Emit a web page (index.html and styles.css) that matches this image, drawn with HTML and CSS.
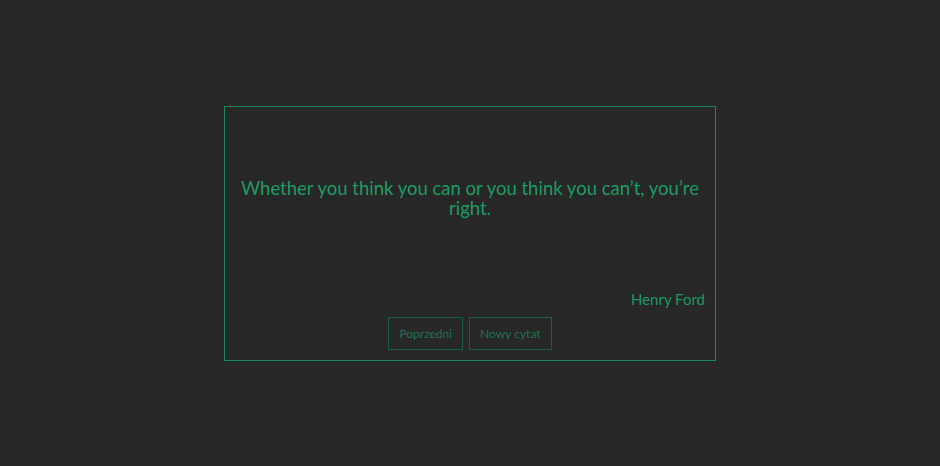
FILE: index.html
```html
<!DOCTYPE html>
<html lang="pl">
<head>
<meta charset="utf-8">
<title>Cytaty</title>
<link rel="stylesheet" href="styles.css">
</head>
<body>
<main class="page">
  <section class="quote-box">
    <div class="quote-area">
      <p class="quote-text">Whether you think you can or you think you can’t, you’re right.</p>
    </div>
    <p class="quote-author">Henry Ford</p>
    <div class="actions">
      <button class="btn" type="button">Poprzedni</button>
      <button class="btn" type="button">Nowy cytat</button>
    </div>
  </section>
</main>
</body>
</html>
```
FILE: styles.css
```css
html, body {
  margin: 0;
  padding: 0;
  height: 100%;
}
body {
  background: #272727;
  font-family: Lato, "Noto Sans", sans-serif;
  color: #1d9c63;
}
.page {
  height: 100%;
  display: flex;
  align-items: center;
  justify-content: center;
}
.quote-box {
  box-sizing: border-box;
  width: 492px;
  height: 255px;
  border: 1px solid #1d8b5a;
  padding: 10px 10px 10px;
  display: flex;
  flex-direction: column;
}
.quote-area {
  flex: 1;
  display: flex;
  align-items: center;
  justify-content: center;
}
.quote-text {
  margin: 0 0 10px;
  font-size: 18.5px;
  line-height: 20px;
  text-align: center;
}
.quote-author {
  margin: 0 0 8px;
  font-size: 15px;
  line-height: 20px;
  text-align: right;
}
.actions {
  display: flex;
  justify-content: center;
  gap: 6px;
}
.btn {
  box-sizing: border-box;
  height: 33px;
  padding: 0 10px;
  background: transparent;
  border: 1px solid #1c5e41;
  color: #237551;
  font-family: inherit;
  font-size: 12px;
  border-radius: 0;
}
```
